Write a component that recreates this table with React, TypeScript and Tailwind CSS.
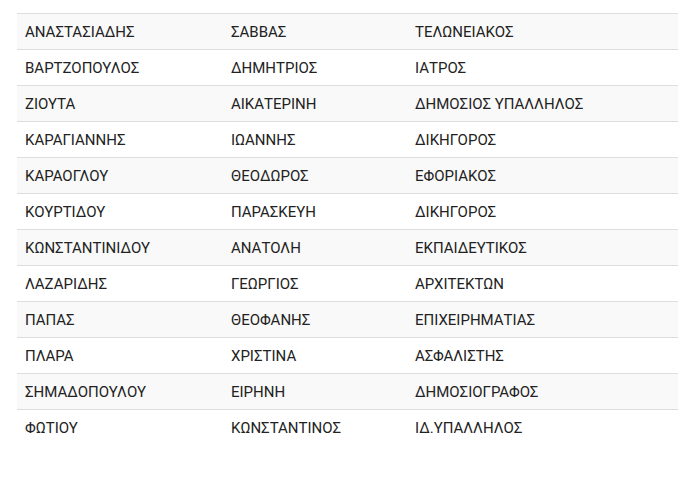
import React from "react";

const rows: [string, string, string][] = [
  ["ΑΝΑΣΤΑΣΙΑΔΗΣ", "ΣΑΒΒΑΣ", "ΤΕΛΩΝΕΙΑΚΟΣ"],
  ["ΒΑΡΤΖΟΠΟΥΛΟΣ", "ΔΗΜΗΤΡΙΟΣ", "ΙΑΤΡΟΣ"],
  ["ΖΙΟΥΤΑ", "ΑΙΚΑΤΕΡΙΝΗ", "ΔΗΜΟΣΙΟΣ ΥΠΑΛΛΗΛΟΣ"],
  ["ΚΑΡΑΓΙΑΝΝΗΣ", "ΙΩΑΝΝΗΣ", "ΔΙΚΗΓΟΡΟΣ"],
  ["ΚΑΡΑΟΓΛΟΥ", "ΘΕΟΔΩΡΟΣ", "ΕΦΟΡΙΑΚΟΣ"],
  ["ΚΟΥΡΤΙΔΟΥ", "ΠΑΡΑΣΚΕΥΗ", "ΔΙΚΗΓΟΡΟΣ"],
  ["ΚΩΝΣΤΑΝΤΙΝΙΔΟΥ", "ΑΝΑΤΟΛΗ", "ΕΚΠΑΙΔΕΥΤΙΚΟΣ"],
  ["ΛΑΖΑΡΙΔΗΣ", "ΓΕΩΡΓΙΟΣ", "ΑΡΧΙΤΕΚΤΩΝ"],
  ["ΠΑΠΑΣ", "ΘΕΟΦΑΝΗΣ", "ΕΠΙΧΕΙΡΗΜΑΤΙΑΣ"],
  ["ΠΛΑΡΑ", "ΧΡΙΣΤΙΝΑ", "ΑΣΦΑΛΙΣΤΗΣ"],
  ["ΣΗΜΑΔΟΠΟΥΛΟΥ", "ΕΙΡΗΝΗ", "ΔΗΜΟΣΙΟΓΡΑΦΟΣ"],
  ["ΦΩΤΙΟΥ", "ΚΩΝΣΤΑΝΤΙΝΟΣ", "ΙΔ.ΥΠΑΛΛΗΛΟΣ"],
];

export default function App() {
  return (
    <div
      className="w-[687px] h-[497px] bg-white pt-[13px] pl-[17px] pr-[9px]"
      style={{ fontFamily: "Roboto, 'Liberation Sans', sans-serif" }}
    >
      <div className="flex flex-col w-[661px]">
        {rows.map((r, i) => (
          <div
            key={i}
            className={`grid grid-cols-[206px_184px_271px] border-t border-[#dddddd] h-[36px] items-center pt-px text-[15px] leading-[20px] text-[#222222] ${
              i % 2 === 0 ? "bg-[#f9f9f9]" : "bg-white"
            }`}
          >
            <div className="px-2">{r[0]}</div>
            <div className="px-2">{r[1]}</div>
            <div className="px-2">{r[2]}</div>
          </div>
        ))}
      </div>
    </div>
  );
}
